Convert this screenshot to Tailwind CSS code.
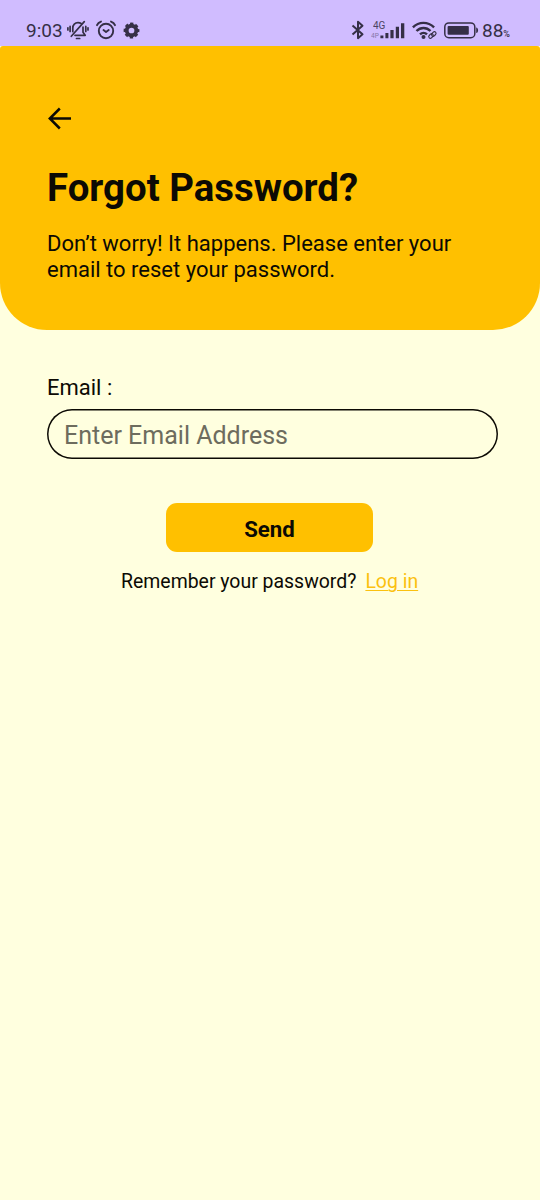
<!DOCTYPE html>
<html lang="en">
<head>
<meta charset="utf-8">
<meta name="viewport" content="width=device-width, initial-scale=1">
<title>Forgot Password</title>
<script src="https://cdn.jsdelivr.net/npm/@tailwindcss/browser@4"></script>
</head>
<body class="bg-[#ffffdf] text-[#0c0a04] font-[Roboto,sans-serif] h-[1200px] overflow-hidden">
<div class="bg-[#d0bcff] h-[46px] flex items-start pl-[26px] pt-[17px] text-[#352f46]">
  <span class="w-[41px] text-[19px] leading-[28px] whitespace-nowrap">9:03</span>
  <!-- muted bell -->
  <svg class="mt-[2px] w-[22px] h-[22px] shrink-0" viewBox="0 0 22 22" fill="none" stroke="currentColor" stroke-width="1.7" stroke-linecap="round" stroke-linejoin="round"><path d="M4.3 17.3 17.3 2.6M5.8 12.6V9c0-3.2 2.2-5.4 5.2-5.4 1 0 2 .2 2.8.7M16 8v5.3l2.2 3H8M9.5 19.5h3.2M3.1 7.4v5M.9 8.8v2.2M18.8 7.4v5M21 8.8v2.2"/></svg>
  <!-- alarm -->
  <svg class="ml-[6px] mt-[2px] w-[22px] h-[22px] shrink-0" viewBox="0 0 22 22" fill="none" stroke="currentColor" stroke-width="1.9" stroke-linecap="round" stroke-linejoin="round"><circle cx="11" cy="12" r="7.2"/><path d="m8.5 11 2.5 2 2.7-2M2 6.2C2.8 4.3 4 3.3 6 2.6M20 6.2c-.8-1.9-2-2.9-4-3.6"/></svg>
  <!-- gear -->
  <svg class="ml-[6px] mt-[5px] w-[17px] h-[17px] shrink-0" viewBox="0 0 16 16"><circle cx="8" cy="8" r="4.5" fill="none" stroke="currentColor" stroke-width="3.6"/><circle cx="8" cy="8" r="6.5" fill="none" stroke="currentColor" stroke-width="1.9" stroke-dasharray="3.1 2.005" stroke-dashoffset="1.55"/></svg>
  <!-- bluetooth -->
  <svg class="ml-[211px] mt-[3px] w-[14px] h-[20px] shrink-0" viewBox="0 0 14 20" fill="none" stroke="currentColor" stroke-width="2" stroke-linejoin="round"><path d="m1.5 5.5 10 8.8L7 18.2V1.8l4.5 3.9-10 8.8"/></svg>
  <!-- mobile signal -->
  <svg class="ml-[6px] mt-[2px] w-[34px] h-[21px] shrink-0" viewBox="0 0 34 21" fill="currentColor"><text x="2" y="9.8" font-size="10" opacity=".85">4G</text><text x="0" y="18.5" font-size="6.5" opacity=".5">4P</text><path d="M9.4 16.4h3v2.8h-3zM14.4 14h3v5.2h-3zM19.4 11h3.2v8.2h-3.2zM24.8 7.8H28v11.4h-3.2zM30 4.3h3.3v14.9H30z"/></svg>
  <!-- wifi with link -->
  <svg class="ml-[7px] mt-[3px] w-[26px] h-[20px] shrink-0" viewBox="0 0 26 20" fill="none" stroke="currentColor" stroke-linecap="butt"><path stroke-width="2.4" d="M.9 7.4c6-6 15-6 21.2 0M4.5 11c4-4 10-4 14 0M8 14.4c2-2 5-2 7 0"/><circle cx="11.5" cy="17" r="2" fill="currentColor" stroke="none"/><g stroke-width="1.1"><rect x="16.5" y="14.4" width="5" height="3.2" rx="1.6" transform="rotate(-45 19 16)"/><rect x="19.3" y="12.4" width="5" height="3.2" rx="1.6" transform="rotate(-45 21.8 14)"/></g></svg>
  <!-- battery -->
  <svg class="ml-[6px] mt-[5px] w-[35px] h-[17px] shrink-0" viewBox="0 0 35 17" fill="currentColor"><rect x=".8" y=".9" width="30" height="14.8" rx="4" fill="none" stroke="currentColor" stroke-width="1.5"/><rect x="3.6" y="3.9" width="21.2" height="8.8" rx="1"/><path d="M32.2 5.5c2.5.3 2.5 5.3 0 5.6z"/></svg>
  <span class="ml-[3px] text-[19px] leading-[28px] whitespace-nowrap">88<span class="text-[9px] font-medium">%</span></span>
</div>
<header class="h-[284px] bg-[#ffc000] rounded-t-[3px] rounded-b-[47px] pl-[47px] pt-[61px]">
  <svg class="w-[24px] h-[24px]" viewBox="0 0 24 24" fill="none" stroke="currentColor" stroke-width="2.5"><path d="M24 11.5H3M12.8 1.5l-10 10 10 10"/></svg>
  <h1 class="mt-[34px] text-[38.4px] leading-[46px] font-bold whitespace-nowrap">Forgot Password?</h1>
  <p class="mt-[20px] text-[22px] leading-[26px] whitespace-nowrap">Don’t worry! It happens. Please enter your<br>email to reset your password.</p>
</header>
<main class="px-[47px] pt-[45px]">
  <label for="email" class="block text-[22px] leading-[26px]">Email :</label>
  <input id="email" type="email" placeholder="Enter Email Address" class="block mt-[8px] w-[451.4px] h-[50px] rounded-full pl-[17px] pt-[3px] text-[25px] placeholder:text-[#6d6c5e] shadow-[inset_0_0_0_1.5px_#0c0a04] outline-none">
  <button class="block mt-[44px] ml-[119px] w-[207px] h-[49px] rounded-[11px] bg-[#ffc000] text-[22.2px] leading-[26px] font-bold pt-[2px]">Send</button>
  <p class="mt-[18px] ml-[74px] text-[19.45px] leading-[24px] whitespace-nowrap">Remember your password?<a class="ml-[9px] text-[#fbc110] underline decoration-1 underline-offset-2">Log in</a></p>
</main>
</body>
</html>
